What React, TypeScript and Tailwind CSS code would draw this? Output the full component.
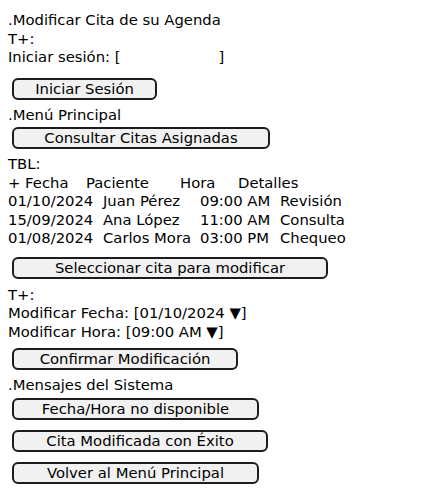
import React from "react";

const Line = ({ children, className = "" }: { children: React.ReactNode; className?: string }) => (
  <div className={`h-[18.5px] leading-[18.5px] whitespace-pre ${className}`}>{children}</div>
);

const Btn = ({ label, w, className = "" }: { label: string; w: string; className?: string }) => (
  <div
    className={`ml-[4px] h-[22px] border-2 border-[#1c1c1c] rounded-[6px] bg-[#f1f1f1] flex items-center justify-center leading-[18px] whitespace-pre ${w} ${className}`}
  >
    {label}
  </div>
);

const rows = [
  ["01/10/2024", "Juan Pérez", "09:00 AM", "Revisión"],
  ["15/09/2024", "Ana López", "11:00 AM", "Consulta"],
  ["01/08/2024", "Carlos Mora", "03:00 PM", "Chequeo"],
];

export default function App() {
  return (
    <div
      className="w-[442px] h-[495px] bg-white text-black text-[14.8px] pl-2 pt-[11px] flex flex-col"
      style={{ fontFamily: '"DejaVu Sans", sans-serif' }}
    >
      <Line>.Modificar Cita de su Agenda</Line>
      <Line>T+:</Line>
      <Line>
        Iniciar sesión: [<span className="inline-block w-[98px]" />]
      </Line>
      <Btn label="Iniciar Sesión" w="w-[145px]" className="mt-[11px]" />
      <Line className="mt-[6px]">.Menú Principal</Line>
      <Btn label="Consultar Citas Asignadas" w="w-[258px]" className="mt-[3px]" />
      <Line className="mt-[6px]">TBL:</Line>
      <div className="grid grid-cols-[78px_94px_58px_1fr] h-[18.5px] leading-[18.5px] whitespace-pre">
        <span>+ Fecha</span>
        <span>Paciente</span>
        <span>Hora</span>
        <span>Detalles</span>
      </div>
      {rows.map((r) => (
        <div key={r[0]} className="grid grid-cols-[95px_97px_80px_1fr] h-[18.5px] leading-[18.5px] whitespace-pre">
          {r.map((c) => (
            <span key={c}>{c}</span>
          ))}
        </div>
      ))}
      <Btn label="Seleccionar cita para modificar" w="w-[316px]" className="mt-[9px]" />
      <Line className="mt-[7px]">T+:</Line>
      <Line>Modificar Fecha: [01/10/2024 ▼]</Line>
      <Line>Modificar Hora: [09:00 AM ▼]</Line>
      <Btn label="Confirmar Modificación" w="w-[226px]" className="mt-[7px]" />
      <Line className="mt-[6px]">.Mensajes del Sistema</Line>
      <Btn label="Fecha/Hora no disponible" w="w-[247px]" className="mt-[3.5px]" />
      <Btn label="Cita Modificada con Éxito" w="w-[256px]" className="mt-[10px]" />
      <Btn label="Volver al Menú Principal" w="w-[247px]" className="mt-[10px]" />
    </div>
  );
}
